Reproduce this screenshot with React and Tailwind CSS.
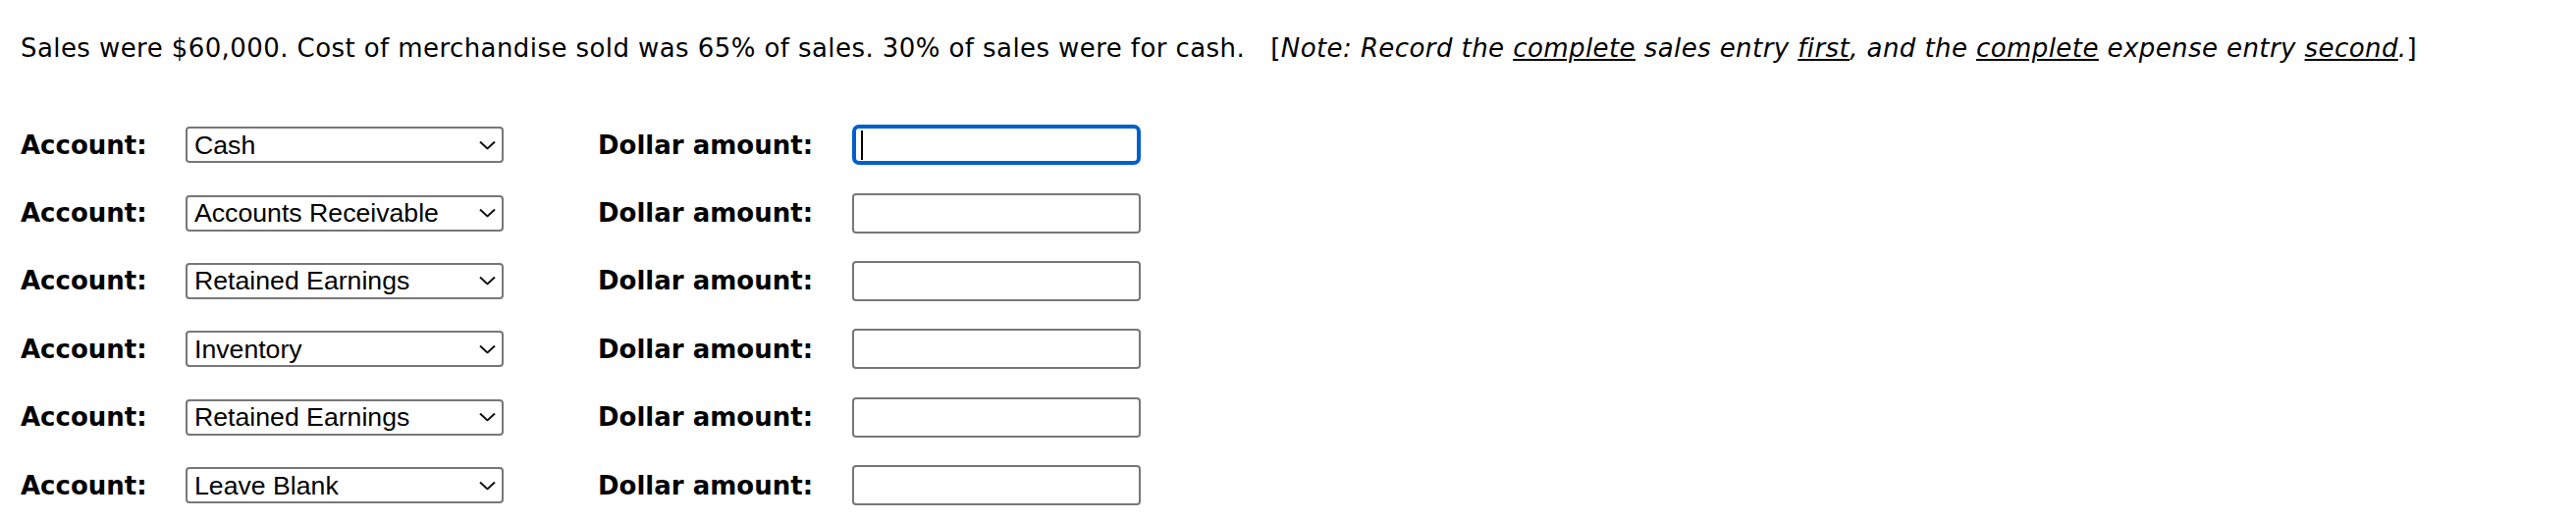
import React from 'react';

const rows = [
  { account: 'Cash', focused: true },
  { account: 'Accounts Receivable' },
  { account: 'Retained Earnings' },
  { account: 'Inventory' },
  { account: 'Retained Earnings' },
  { account: 'Leave Blank' },
];

const verdana = { fontFamily: '"DejaVu Sans", Verdana, sans-serif' };

const Chevron = () => (
  <svg width="17" height="9" viewBox="0 0 17 9" fill="none" className="absolute right-[8px] top-1/2 -translate-y-1/2 pointer-events-none">
    <path d="M1 1 L8.5 8 L16 1" stroke="#111" strokeWidth="2" />
  </svg>
);

const AccountSelect = ({ value }) => (
  <div className="relative w-[324px] h-[37px]">
    <div className="w-full h-full border-2 border-[#777] rounded-[4px] bg-white flex items-center pl-[7px] text-[26.67px] text-black font-['Liberation_Sans',Arial,sans-serif]">
      {value}
    </div>
    <Chevron />
  </div>
);

const AmountInput = ({ focused }) =>
  focused ? (
    <div className="w-[294px] h-[41px] border-[4px] border-[#005fcc] rounded-[7px] bg-white flex items-center pl-[5px]">
      <span className="block w-[2px] h-[30px] bg-black" />
    </div>
  ) : (
    <div className="w-[294px] h-[41px] border-2 border-[#777] rounded-[4px] bg-white" />
  );

export default function App() {
  return (
    <div className="w-[2624px] h-[531px] bg-white text-black pt-[34px] pl-[21px]" style={verdana}>
      <p className="text-[26px] leading-[30px] tracking-[0.42px] whitespace-nowrap">
        Sales were $60,000. Cost of merchandise sold was 65% of sales. 30% of sales were for cash.&nbsp;&nbsp;&nbsp;[
        <i>
          Note: Record the <u>complete</u> sales entry <u>first</u>, and the <u>complete</u> expense entry{' '}
          <u>second</u>.
        </i>
        ]
      </p>
      <div className="mt-[49px] flex flex-col">
        {rows.map((r, i) => (
          <div key={i} className="h-[69.4px] flex items-center">
            <span className="w-[168px] text-[26px] leading-[30px] font-bold">Account:</span>
            <AccountSelect value={r.account} />
            <span className="ml-[96px] w-[259px] text-[26px] leading-[30px] font-bold">Dollar amount:</span>
            <AmountInput focused={r.focused} />
          </div>
        ))}
      </div>
    </div>
  );
}
